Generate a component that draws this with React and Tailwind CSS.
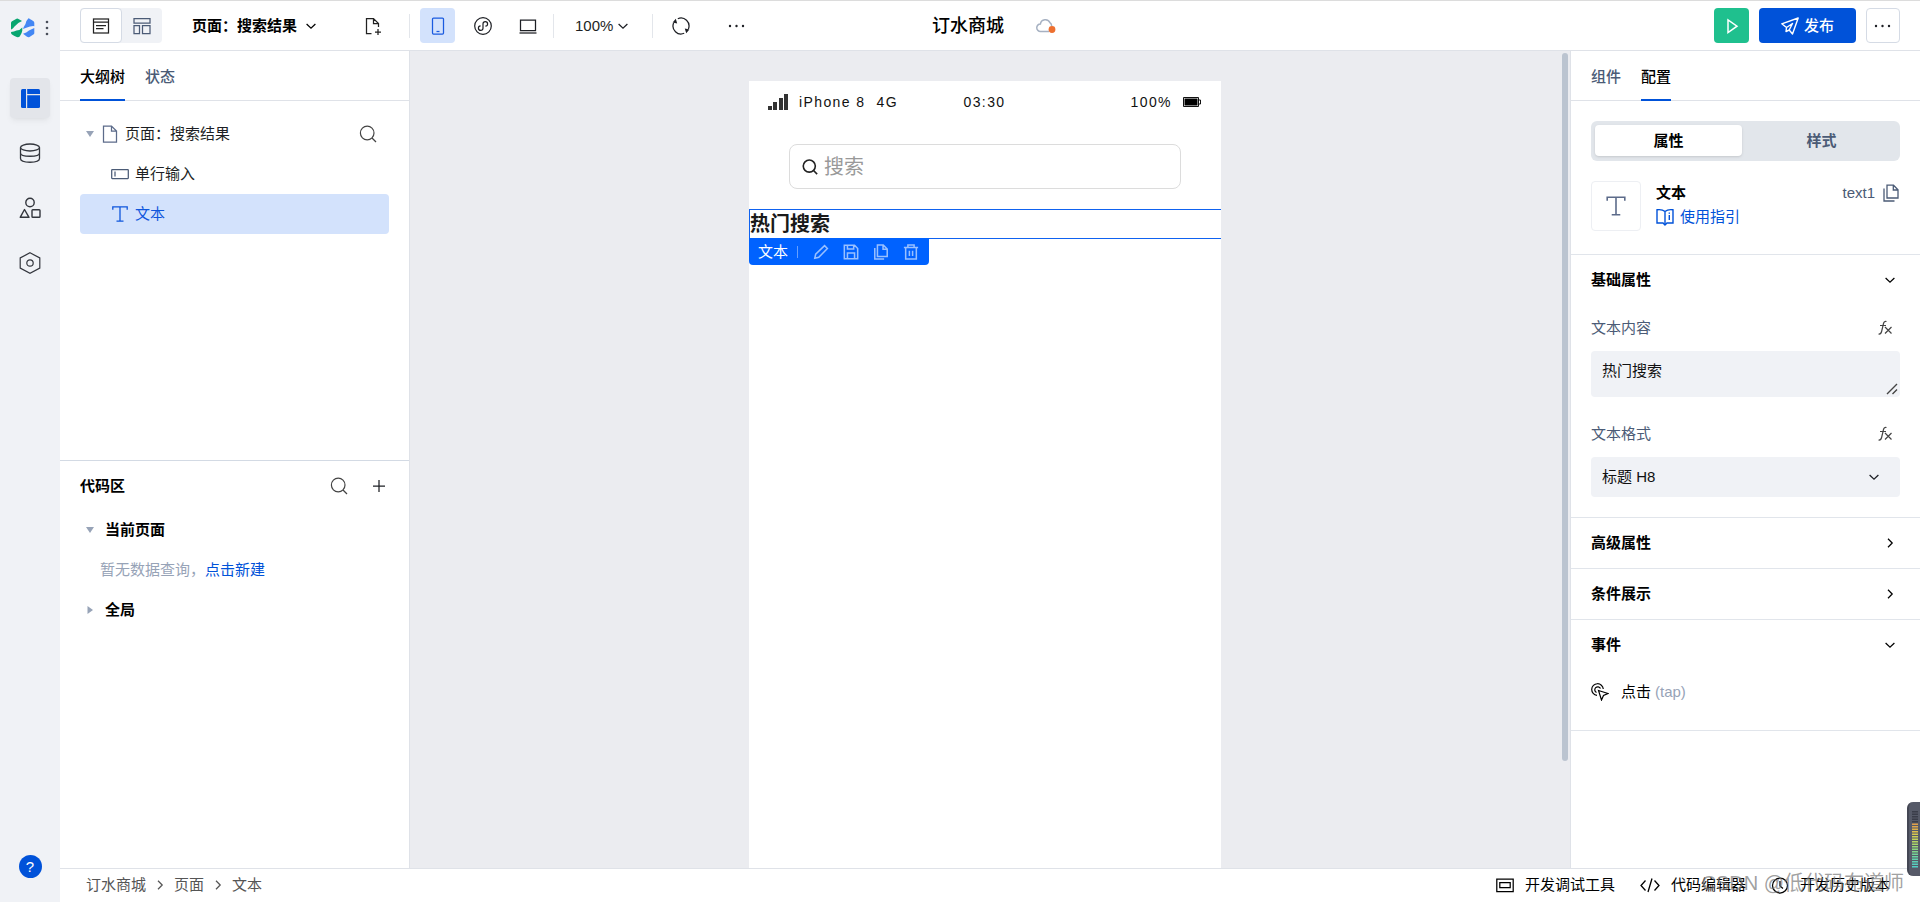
import React from 'react';

const Svg = ({ size = 18, box = 18, className = '', sw = 1.25, children }) => (
  <svg
    width={size}
    height={size}
    viewBox={`0 0 ${box} ${box}`}
    fill="none"
    stroke="currentColor"
    strokeWidth={sw}
    className={`shrink-0 ${className}`}
    aria-hidden="true"
  >
    {children}
  </svg>
);

const ChevronDown = ({ className = '' }) => (
  <Svg size={12} box={12} sw={1.25} className={className}>
    <path d="M1.6 4 L6 8.2 L10.4 4" />
  </Svg>
);

const ChevronRight = ({ className = '' }) => (
  <Svg size={12} box={12} sw={1.25} className={className}>
    <path d="M4 1.8 L8.2 6 L4 10.2" />
  </Svg>
);

const SearchIcon = ({ size = 18, sw = 1.2, className = '' }) => (
  <Svg size={size} sw={sw} className={className}>
    <circle cx="8.2" cy="8" r="6.8" />
    <path d="M13 13 L17 17" />
  </Svg>
);

const TextIcon = ({ size = 18, sw = 1.3, className = '' }) => (
  <Svg size={size} sw={sw} className={className}>
    <path d="M1.8 4.8 V1.8 H16.2 V4.8 M9 1.8 V16.2 M5.5 16.2 H12.5" />
  </Svg>
);

const FileIcon = () => (
  <Svg className="text-[#5c6b8a]">
    <path d="M2.5 1 H10.5 L15.5 6 V17 H2.5 Z M10.5 1 V6 H15.5" />
  </Svg>
);

const CopyIcon = ({ size = 18, sw = 1.3, className = '' }) => (
  <Svg size={size} sw={sw} className={className}>
    <path d="M5 1.2 H11.5 L16 5.7 V14 H5 Z M11.3 1.2 V6 H16 M2 4.5 V17 H12.5" />
  </Svg>
);

const DotsIcon = () => (
  <svg width="18" height="4" viewBox="0 0 18 4" fill="currentColor" aria-hidden="true">
    <circle cx="2" cy="2" r="1.2" />
    <circle cx="8.5" cy="2" r="1.2" />
    <circle cx="15" cy="2" r="1.2" />
  </svg>
);

const Separator = () => <span className="h-6 w-px shrink-0 bg-[#e3e6eb]" />;

function Sidebar() {
  const item = 'flex size-10 items-center justify-center rounded';
  return (
    <aside className="flex w-15 shrink-0 flex-col items-center bg-[#f0f2f6] text-[#33363d]">
      <div className="flex h-[54px] items-center gap-[10px]">
        <svg width="24" height="20" viewBox="0 0 24 20" aria-label="logo">
          <path d="M0 5 Q0 3.800 1 3.200 L5.500 0.800 Q6.500 0.400 7.500 0.900 L11 3 Q6 5 3.500 8.500 Q2.500 10 0.500 11.500 L0 11 Z" fill="#07a56f" />
          <path d="M0 14 Q3 13.500 5.500 12.500 Q9.500 12 11.300 9.500 V12.500 Q11 15 9 18 Q8.500 19.300 6.500 19.300 Q5.500 19.300 1 16.600 Q0 16 0 14 Z" fill="#07a56f" />
          <path d="M17.500 0.300 Q18.500 0.700 22.500 3.200 Q23.300 3.800 23.300 5 V8.200 Q22 7.800 19 8.500 Q15 9.500 12 11 Q12.800 8.500 14.500 6 Q15.500 2 17.500 0.300 Z" fill="#4387f4" />
          <path d="M12 15.800 Q15.500 14.800 18 12.500 Q20.500 11 23.300 10 V15 Q23.300 16 22.300 16.600 L18.500 19 Q17.300 19.500 16 18.800 Z" fill="#4387f4" />
        </svg>
        <svg width="4" height="16" viewBox="0 0 4 16" fill="#4a4f5a" aria-hidden="true">
          <circle cx="2" cy="2" r="1.300" />
          <circle cx="2" cy="8" r="1.300" />
          <circle cx="2" cy="14" r="1.300" />
        </svg>
      </div>
      <nav className="mt-[23px] flex flex-col items-center gap-[15px]">
        <button className={`${item} bg-[#e3e5ea] shadow-md shadow-black/5`} aria-label="页面设计">
          <svg width="19" height="19" viewBox="0 0 19 19" fill="#0052d9" aria-hidden="true">
            <path d="M1.500 0 H5 V19 H1.500 Q0 19 0 17.500 V1.500 Q0 0 1.500 0 Z" />
            <path d="M6.200 0 H17.500 Q19 0 19 1.500 V5 H6.200 Z" />
            <path d="M6.200 6.200 H19 V17.500 Q19 19 17.500 19 H6.200 Z" />
          </svg>
        </button>
        <button className={item} aria-label="数据源">
          <Svg size={22} box={22} sw={1.3}>
            <ellipse cx="11" cy="5.500" rx="9.500" ry="3.500" />
            <path d="M1.500 5.500 V16.500 C1.500 21.500 20.500 21.500 20.500 16.500 V5.500 M1.500 11 C1.500 15.300 20.500 15.300 20.500 11" />
          </Svg>
        </button>
        <button className={item} aria-label="组件库">
          <Svg size={22} box={22} sw={1.400}>
            <circle cx="11" cy="5.500" r="4.200" />
            <path d="M5.500 12.500 L10 20.300 H1.200 Z" strokeLinejoin="round" />
            <rect x="13" y="12.700" width="8" height="7.600" rx="0.800" />
          </Svg>
        </button>
        <button className={item} aria-label="设置">
          <Svg size={22} box={22} sw={1.2}>
            <path d="M11 0.800 L20.800 5.900 V16.100 L11 21.200 L1.200 16.100 V5.900 Z" />
            <circle cx="11" cy="11" r="3.200" />
          </Svg>
        </button>
      </nav>
      <button
        className="mt-auto mb-6 flex size-[23px] items-center justify-center rounded-full bg-[#0052d9] text-[15px] leading-none text-white"
        aria-label="帮助"
      >
        ?
      </button>
    </aside>
  );
}

function Header() {
  return (
    <header className="flex h-[50px] shrink-0 items-center border-b border-[#dfe2e8] pr-5 pl-5">
      <div className="flex flex-1 items-center">
        <div className="flex h-[35px] rounded bg-[#f0f2f6]">
          <button className="flex w-[42px] items-center justify-center rounded border border-[#d5dbe5] bg-white text-[#222]" aria-label="大纲视图">
            <Svg>
              <rect x="1.500" y="2" width="15" height="14" />
              <path d="M1.500 5 H16.500 M4 8.500 H14 M4 11.500 H11.500" />
            </Svg>
          </button>
          <button className="flex w-10 items-center justify-center text-[#4b5b76]" aria-label="布局视图">
            <Svg>
              <path d="M1 1.500 H17 V6 H1 Z M1 8.500 H6.500 V16.500 H1 Z M9.500 8.500 H17 V16.500 H9.500 Z" />
            </Svg>
          </button>
        </div>
        <button className="ml-[30px] flex items-center gap-2 font-bold text-black">
          页面：搜索结果 <ChevronDown />
        </button>
        <button className="mr-[27px] ml-[47px] text-[#222]" aria-label="新建页面">
          <Svg>
            <path d="M7.500 16.500 H2.500 V1.500 H9.500 L14.500 6.500 V10 M9.500 1.500 V6.500 H14.500 M14 12 V18 M11 15 H17" />
          </Svg>
        </button>
        <Separator />
        <div className="mr-2 ml-[10px] flex gap-[10px] text-[#1d1f24]">
          <button className="flex size-[35px] items-center justify-center rounded bg-[#d3e2fc] text-[#1a5be0]" aria-label="手机">
            <Svg>
              <rect x="3.500" y="1" width="11" height="16" rx="1" />
              <path d="M7.500 14.500 H10.500" />
            </Svg>
          </button>
          <button className="flex size-[35px] items-center justify-center" aria-label="小程序">
            <Svg sw={1.2}>
              <circle cx="9" cy="9" r="8.300" />
              <path d="M6.600 8.800 A2.300 2.300 0 1 0 9 11.200 V6.800 A2.300 2.300 0 1 1 11.400 9.200" />
            </Svg>
          </button>
          <button className="flex size-[35px] items-center justify-center" aria-label="桌面">
            <Svg>
              <path d="M1.500 3 H16.500 V13.500 H1.500 Z" />
              <path d="M0.500 16 H17.500" />
            </Svg>
          </button>
        </div>
        <Separator />
        <button className="mr-[23px] ml-[21px] flex items-center gap-1">
          100% <ChevronDown />
        </button>
        <Separator />
        <button className="ml-[19px]" aria-label="刷新">
          <Svg>
            <path d="M5.800 1.700 A8 8 0 0 1 16.400 12 M12.200 16.300 A8 8 0 0 1 1.600 6" />
            <path d="M3.800 1.800 L5.200 6.600 L0.600 5.600 Z M14.200 16.200 L12.800 11.400 L17.400 12.400 Z" fill="currentColor" stroke="none" />
          </Svg>
        </button>
        <button className="ml-[38px]" aria-label="更多">
          <DotsIcon />
        </button>
      </div>
      <div className="flex items-center gap-8 pl-2">
        <h1 className="text-lg font-medium text-black">订水商城</h1>
        <svg width="20" height="16" viewBox="0 0 20 16" fill="none" aria-label="未保存">
          <path d="M13 13.400 H4.500 A3.700 3.700 0 0 1 4.400 6 A5 5 0 0 1 14 4.800 Q15.500 5.500 15.700 8" stroke="#a6b1c2" strokeWidth="1.500" />
          <circle cx="16" cy="11.500" r="3.400" fill="#ed7030" />
        </svg>
      </div>
      <div className="flex flex-1 items-center justify-end gap-[10px]">
        <button className="flex size-[35px] items-center justify-center rounded bg-[#1fc08e] text-white" aria-label="预览">
          <Svg sw={1.500}>
            <path d="M5 3 V15.500 L14 9.200 Z" />
          </Svg>
        </button>
        <button className="flex h-[35px] w-[97px] items-center justify-center gap-[5px] rounded bg-[#0052d9] text-white">
          <Svg sw={1.400}>
            <path d="M0.800 6.800 L17.200 1 L11.500 17 L8.200 13 L5 14.500 L5.500 10.500 Z M5.500 10.500 L11.500 6.500 L8.200 13" strokeLinejoin="round" />
          </Svg>
          <span className="font-medium">发布</span>
        </button>
        <button className="flex h-[35px] w-[34px] items-center justify-center rounded border border-[#d5dbe5]" aria-label="更多操作">
          <DotsIcon />
        </button>
      </div>
    </header>
  );
}

const Triangle = ({ right }) => (
  <svg width="10" height="10" viewBox="0 0 10 10" fill="#97a3b7" className="shrink-0" aria-hidden="true">
    {right ? <path d="M2.500 1 V9 L8 5 Z" /> : <path d="M1 2 H9 L5 8 Z" />}
  </svg>
);

function LeftPanel() {
  return (
    <section className="flex w-[350px] shrink-0 flex-col border-r border-[#dfe2e8] bg-white">
      <div className="flex h-[410px] shrink-0 flex-col border-b border-[#d3dae4]">
        <div className="flex h-[50px] shrink-0 gap-5 border-b border-[#dfe2e8] px-5">
          <button className="-mb-px border-b-2 border-[#0052d9] pt-[3px] font-medium text-black">大纲树</button>
          <button className="pt-[2px] font-medium text-[#4b5b76]">状态</button>
        </div>
        <ul className="mt-[13px] px-5">
          <li className="flex h-10 items-center gap-[6px] pr-3 pl-[5px]">
            <Triangle />
            <span className="flex flex-1 items-center gap-[6px]">
              <FileIcon />
              页面：搜索结果
            </span>
            <button aria-label="搜索组件"><SearchIcon className="text-[#444]" /></button>
          </li>
          <li className="flex h-10 items-center gap-[6px] pl-[31px]">
            <Svg className="text-[#4b5b76]">
              <rect x="0.700" y="4.500" width="16.600" height="9" rx="0.500" />
              <path d="M4 6.500 V11.500" />
            </Svg>
            单行输入
          </li>
          <li className="flex h-10 items-center gap-[6px] rounded bg-[#d3e2fc] pl-[31px] text-[#0f56dc]">
            <TextIcon />
            文本
          </li>
        </ul>
      </div>
      <div className="flex flex-col px-5">
        <div className="flex h-[49px] items-center pr-[2px]">
          <h2 className="flex-1 font-bold text-black">代码区</h2>
          <button aria-label="搜索代码"><SearchIcon className="text-[#444]" /></button>
          <button className="ml-[23px]" aria-label="新建代码">
            <Svg size={16} box={16}>
              <path d="M8 2 V14 M2 8 H14" />
            </Svg>
          </button>
        </div>
        <button className="flex h-10 items-center gap-[10px] pl-[5px] font-bold text-black">
          <Triangle />
          当前页面
        </button>
        <p className="flex h-10 items-center pl-5 text-[#97a3b7]">
          暂无数据查询，<a href="#new" className="text-[#0052d9]">点击新建</a>
        </p>
        <button className="flex h-10 items-center gap-[10px] pl-[5px] font-bold text-black">
          <Triangle right />
          全局
        </button>
      </div>
    </section>
  );
}

function Canvas() {
  return (
    <main className="flex min-w-0 flex-1 bg-[#ebecf0]">
      <div className="flex flex-1 justify-center pt-[30px]">
        <div className="flex w-[472px] flex-col bg-white">
          <div className="grid h-[43px] grid-cols-3 items-center pr-5 pb-[2px] pl-[19px] text-sm tracking-widest text-[#111]">
            <div className="flex items-center gap-[11px]">
              <svg width="20" height="16" viewBox="0 0 20 16" fill="#333" aria-hidden="true">
                <path d="M0 12 H4 V16 H0 Z M5 8 H9 V16 H5 Z M11 4 H15 V16 H11 Z M16 0 H20 V16 H16 Z" />
              </svg>
              <span>iPhone 8</span>
              <span>4G</span>
            </div>
            <span className="text-center">03:30</span>
            <div className="flex items-center justify-end gap-[11px]">
              <span>100%</span>
              <svg width="18" height="10" viewBox="0 0 18 10" aria-hidden="true">
                <path d="M0.500 0.500 H15.500 V9.500 H0.500 Z" fill="none" stroke="#111" />
                <path d="M1.500 1.500 H14.500 V8.500 H1.500 Z" fill="#000" />
                <path d="M16 3 H17.500 V7 H16" fill="none" stroke="#111" />
              </svg>
            </div>
          </div>
          <div className="px-10 py-5">
            <label className="flex h-[45px] items-center gap-[6px] rounded-lg border border-[#dcdcdc] pl-3 text-[#222]">
              <SearchIcon size={16} sw={1.800} />
              <input
                aria-label="搜索"
                placeholder="搜索"
                className="min-w-0 flex-1 bg-transparent text-xl leading-6 outline-none placeholder:text-[#999]"
              />
            </label>
          </div>
          <div className="relative h-[30px] border border-r-0 border-[#0f62f0]">
            <h2 className="text-xl leading-7 font-bold text-[#1a1a1a]">热门搜索</h2>
            <div className="absolute top-7 -left-px flex h-[27px] w-[180px] items-center rounded-b bg-[#0062ff] pl-[9px] text-white">
              文本
              <span className="mr-[15px] ml-[9px] h-3 w-px bg-white/40" />
              <div className="flex gap-[14px] text-white/60">
                <button aria-label="编辑">
                  <Svg size={16} sw={1.700}>
                    <path d="M2 16 L3 11.500 L13 1.800 L16.200 5 L6.500 15 Z" />
                  </Svg>
                </button>
                <button aria-label="保存">
                  <Svg size={16} sw={1.700}>
                    <path d="M1.500 1.500 H13 L16.500 5 V16.500 H1.500 Z M5 1.500 V5.500 H12 V1.500 M5 16.500 V10 H13 V16.500" />
                  </Svg>
                </button>
                <button aria-label="复制">
                  <CopyIcon size={16} sw={1.700} />
                </button>
                <button aria-label="删除">
                  <Svg size={16} sw={1.700}>
                    <path d="M1 4 H17 M5.500 4 V1 H12.500 V4 M3 4 V16.800 H15 V4 M7.200 7.500 V13.500 M10.800 7.500 V13.500" />
                  </Svg>
                </button>
              </div>
            </div>
          </div>
        </div>
      </div>
      <div className="w-[10px] shrink-0 pt-[2px] pl-[2px]">
        <div className="h-[708px] w-[6px] rounded-full bg-[#bbc4d0]" />
      </div>
    </main>
  );
}

const Section = ({ title, open, children }) => (
  <div className="border-b border-[#e1e5eb] px-5">
    <button className="flex h-[50px] w-full items-center justify-between pr-1 font-bold text-black">
      {title}
      {open ? <ChevronDown /> : <ChevronRight />}
    </button>
    {children}
  </div>
);

const FieldHead = ({ id, children }) => (
  <div className="flex h-[46px] items-center justify-between pr-[7px]">
    <label htmlFor={id} className="text-[#4b5b76]">{children}</label>
    <button aria-label="绑定表达式">
      <Svg size={16} box={16} sw={1.2} className="text-[#444]">
        <path d="M9.500 1.500 Q7.200 0.800 6.500 3.500 L4.600 11.500 Q3.900 14.500 1.500 14 M3 5.500 H9" />
        <path d="M8 7 L14.500 13.500 M14.500 7 L8 13.500" />
      </Svg>
    </button>
  </div>
);

function RightPanel() {
  return (
    <section className="w-[350px] shrink-0 border-l border-[#dfe2e8] bg-white">
      <div className="flex h-[50px] gap-5 border-b border-[#dfe2e8] px-5">
        <button className="pt-[2px] font-medium text-[#4b5b76]">组件</button>
        <button className="-mb-px border-b-2 border-[#0052d9] pt-[3px] font-medium text-black">配置</button>
      </div>
      <div className="border-b border-[#e1e5eb] px-5 pt-5 pb-[23px]">
        <div className="flex h-10 rounded-md bg-[#e2e6eb] p-1 font-bold">
          <button className="mb-px w-[147px] rounded-sm bg-white text-black shadow-sm">属性</button>
          <button className="flex-1 pl-[5px] text-[#4b5b76]">样式</button>
        </div>
        <div className="mt-5 flex">
          <div className="flex size-[50px] items-center justify-center rounded border border-[#edeff3]">
            <TextIcon size={22} className="text-[#5c6b8a]" />
          </div>
          <div className="ml-[15px] flex flex-1 flex-col">
            <strong className="leading-6 text-black">文本</strong>
            <a href="#guide" className="flex items-center gap-[6px] leading-6 text-[#0052d9]">
              <Svg sw={1.400}>
                <path d="M9 3.500 Q6 1 1 1.800 V15 H7 L9 17 L11 15 H17 V1.800 Q12 1 9 3.500 V15.500 M13.300 7 V12 M13.300 4.500 V5.700" />
              </Svg>
              使用指引
            </a>
          </div>
          <div className="flex h-6 items-center gap-[7px] text-[#4b5b76]">
            text1
            <button aria-label="复制标识"><CopyIcon /></button>
          </div>
        </div>
      </div>
      <Section title="基础属性" open>
        <FieldHead id="content">文本内容</FieldHead>
        <div className="relative">
          <textarea
            id="content"
            defaultValue="热门搜索"
            className="block h-[46px] w-full resize-none rounded bg-[#f0f2f6] px-[11px] py-2 leading-6 text-[#111] outline-none"
          />
          <Svg size={12} box={12} sw={1.400} className="pointer-events-none absolute right-[2px] bottom-[2px] text-[#444]">
            <path d="M1 11 L11 1 M6.500 11 L11 6.500" />
          </Svg>
        </div>
        <div className="h-[14px]" />
        <FieldHead id="format">文本格式</FieldHead>
        <div className="relative mb-5">
          <select id="format" className="h-10 w-full appearance-none rounded bg-[#f0f2f6] px-[11px] text-[#111] outline-none">
            <option>标题 H8</option>
          </select>
          <ChevronDown className="pointer-events-none absolute top-[14px] right-5" />
        </div>
      </Section>
      <Section title="高级属性" />
      <Section title="条件展示" />
      <Section title="事件" open>
        <button className="mb-[17px] flex h-[43px] items-center text-black">
          <Svg sw={1.2}>
            <path d="M6 12.300 A5.800 5.800 0 1 1 12.300 6 M5.500 9.500 A3 3 0 1 1 9.500 5.500 M7.500 7.500 L17 10.500 L12.500 12.500 L10.500 17 Z" />
          </Svg>
          <span className="ml-3">点击</span>
          <span className="ml-1 text-[#97a3b7]">(tap)</span>
        </button>
      </Section>
    </section>
  );
}

function Footer() {
  const tool = 'flex items-center gap-[11px]';
  return (
    <footer className="relative flex h-[34px] shrink-0 items-center justify-between border-t border-[#dfe2e8] bg-white pr-[30px] pl-[26px]">
      <nav className="flex items-center gap-2 pb-[2px] text-[#555]">
        <a href="#app">订水商城</a>
        <ChevronRight />
        <a href="#page">页面</a>
        <ChevronRight />
        <a href="#text">文本</a>
      </nav>
      <div className="flex items-center gap-[25px] pb-[2px] text-black">
        <button className={tool}>
          <Svg>
            <path d="M0.800 3 H17.200 V15.500 H0.800 Z M3.800 6.500 H14.200 V11.500 H3.800 Z" />
          </Svg>
          开发调试工具
        </button>
        <button className={tool}>
          <Svg size={20} box={20} sw={1.300}>
            <path d="M5.500 5.500 L1 10.500 L5.500 15.500 M14.500 5.500 L19 10.500 L14.500 15.500 M12 3.500 L8 17" />
          </Svg>
          代码编辑器
        </button>
        <button className={tool}>
          <Svg>
            <circle cx="9" cy="9.500" r="7.500" />
            <path d="M9 5 V10 L12 12.500" />
          </Svg>
          开发历史版本
        </button>
      </div>
      <span className="pointer-events-none absolute top-0 right-4 text-xl leading-7 whitespace-nowrap text-[#777]/70">
        CSDN @低代码布道师
      </span>
    </footer>
  );
}

const METER = ['#3a3d49', '#3a3d49', '#3a3d49', '#3a3d49', '#3a3d49', '#e0a04a', '#e0a84a', '#deb14b', '#dcc04c', '#d6ca50', '#cdd055', '#c2d45c', '#b5d663', '#a8d76b', '#9ad775', '#8cd780', '#7fd68c', '#74d498', '#6ad3a3', '#62d2ac', '#5cd1b5', '#57d0bd', '#52cfc4'];

export default function App() {
  return (
    <div className="relative flex h-screen overflow-hidden border-t border-[#dcdcdc] bg-white font-['Liberation_Sans','Noto_Sans_CJK_SC',sans-serif] text-[15px] leading-6 text-[#1d1f24]">
      <Sidebar />
      <div className="flex min-w-0 flex-1 flex-col">
        <Header />
        <div className="flex min-h-0 flex-1">
          <LeftPanel />
          <Canvas />
          <RightPanel />
        </div>
        <Footer />
      </div>
      <div className="absolute right-0 bottom-[26px] h-[74px] w-[13px] rounded-l-md border-l-2 border-[#444754] bg-[#565a68]">
        <svg width="11" height="74" viewBox="0 0 11 74" aria-hidden="true">
          {METER.map((c, i) => (
            <rect key={i} x="3" y={9 + i * 2.5} width="6" height="1.500" fill={c} />
          ))}
        </svg>
      </div>
    </div>
  );
}
